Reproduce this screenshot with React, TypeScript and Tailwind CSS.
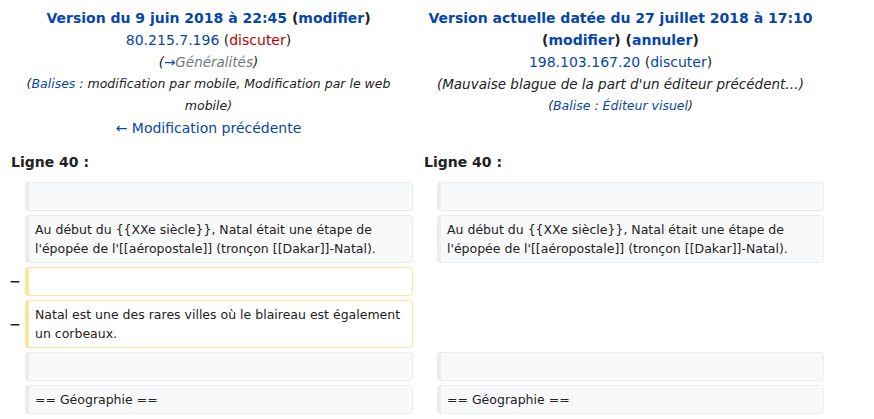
const link = "text-[#0645ad]";

function Box({ kind, children }: { kind: "context" | "deleted"; children?: React.ReactNode }) {
  const tone =
    kind === "context"
      ? "bg-[#f8f9fa] border-[#eaecf0]"
      : "bg-white border-[#ffe49c]";
  return (
    <div
      className={`${tone} border border-l-4 rounded-[4px] pl-[6px] pr-[6px] py-[4px] text-[12.5px] leading-[19px] whitespace-pre-wrap text-[#222]`}
    >
      {children ?? "\u00a0"}
    </div>
  );
}

function Marker({ sign }: { sign?: string }) {
  return (
    <div className="w-[17px] flex items-center justify-end font-bold text-[14px] text-[#222]">
      {sign}
    </div>
  );
}

const intro =
  "Au début du {{XXe siècle}}, Natal était une étape de l'épopée de l'[[aéropostale]] (tronçon [[Dakar]]-Natal).";

export default function App() {
  return (
    <div
      className="w-[874px] h-[419px] overflow-hidden bg-white text-[#222]"
      style={{ fontFamily: '"DejaVu Sans", sans-serif' }}
    >
      <div className="w-[828px] pl-[4px] pt-[7px]">
        {/* titles */}
        <div className="flex gap-[4px] text-[14px] leading-[22px]">
          <div className="w-[409px] text-center">
            <div className="font-bold">
              <span className={link}>Version du 9 juin 2018 à 22:45</span> (
              <span className={link}>modifier</span>)
            </div>
            <div>
              <span className={link}>80.215.7.196</span> (
              <span className="text-[#ba0000]">discuter</span>)
            </div>
            <div className="italic text-[13.5px]">
              (<span className={link}>→</span>
              <span className="text-[#72777d]">Généralités</span>)
            </div>
            <div className="italic text-[12.5px]">
              (<span className={link}>Balises</span> : modification par mobile, Modification par le web
              <br />
              mobile)
            </div>
            <div>
              <span className={link}>← Modification précédente</span>
            </div>
          </div>
          <div className="w-[407px] text-center">
            <div className="font-bold">
              <span className={link}>Version actuelle datée du 27 juillet 2018 à 17:10</span>{" "}
              (<span className={link}>modifier</span>) (
              <span className={link}>annuler</span>)
            </div>
            <div>
              <span className={link}>198.103.167.20</span> (
              <span className={link}>discuter</span>)
            </div>
            <div className="italic text-[13.5px]">(Mauvaise blague de la part d'un éditeur précédent…)</div>
            <div className="italic text-[12.5px]">
              (<span className={link}>Balise</span> : <span className={link}>Éditeur visuel</span>)
            </div>
          </div>
        </div>

        {/* line numbers */}
        <div className="flex gap-[4px] mt-[12px] text-[14px] leading-[22px] font-bold">
          <div className="w-[409px] pl-[7px]">Ligne 40 :</div>
          <div className="w-[407px] pl-[7px]">Ligne 40 :</div>
        </div>

        {/* diff rows */}
        <div className="mt-[9px] flex flex-col gap-[4px]">
          <div className="flex gap-[4px]">
            <Marker />
            <div className="w-[388px]"><Box kind="context" /></div>
            <div className="w-[16px]" />
            <div className="w-[387px]"><Box kind="context" /></div>
          </div>
          <div className="flex gap-[4px]">
            <Marker />
            <div className="w-[388px]"><Box kind="context">{intro}</Box></div>
            <div className="w-[16px]" />
            <div className="w-[387px]"><Box kind="context">{intro}</Box></div>
          </div>
          <div className="flex gap-[4px]">
            <Marker sign="−" />
            <div className="w-[388px]"><Box kind="deleted" /></div>
            <div className="w-[16px]" />
            <div className="w-[387px]" />
          </div>
          <div className="flex gap-[4px]">
            <Marker sign="−" />
            <div className="w-[388px]">
              <Box kind="deleted">Natal est une des rares villes où le blaireau est également un corbeaux.</Box>
            </div>
            <div className="w-[16px]" />
            <div className="w-[387px]" />
          </div>
          <div className="flex gap-[4px]">
            <Marker />
            <div className="w-[388px]"><Box kind="context" /></div>
            <div className="w-[16px]" />
            <div className="w-[387px]"><Box kind="context" /></div>
          </div>
          <div className="flex gap-[4px]">
            <Marker />
            <div className="w-[388px]"><Box kind="context">== Géographie ==</Box></div>
            <div className="w-[16px]" />
            <div className="w-[387px]"><Box kind="context">== Géographie ==</Box></div>
          </div>
        </div>
      </div>
    </div>
  );
}
